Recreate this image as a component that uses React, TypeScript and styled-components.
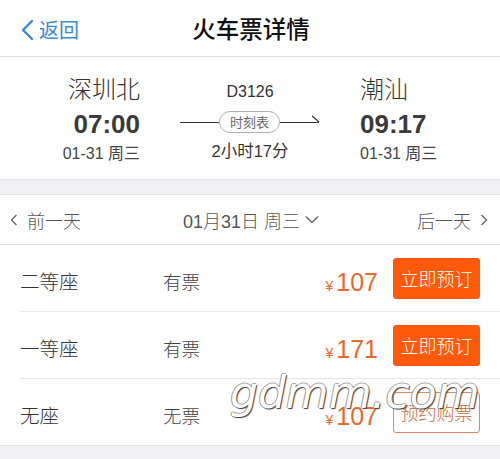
import React from 'react'
import styled, { createGlobalStyle } from 'styled-components'

const GlobalStyle = createGlobalStyle`
    html, body {
        margin: 0;
        padding: 0;
        background: #ffffff;
        font-family: "Liberation Sans", "Noto Sans CJK SC", sans-serif;
    }
`

type Seat = {
    name: string
    status: string
    price: number
    action: string
    outline?: boolean
}

const seats: Seat[] = [
    { name: '二等座', status: '有票', price: 107, action: '立即预订' },
    { name: '一等座', status: '有票', price: 171, action: '立即预订' },
    { name: '无座', status: '无票', price: 107, action: '预约购票', outline: true },
]

const App: React.FC = () => {
    return (
        <Page>
            <GlobalStyle />
            <NavBar>
                <BackLink>
                    <svg width="14" height="22" viewBox="0 0 14 22" fill="none">
                        <path d="M12 2L3 11l9 9" stroke="currentColor" strokeWidth="2.4" strokeLinecap="round" strokeLinejoin="round" />
                    </svg>
                    返回
                </BackLink>
                <Title>火车票详情</Title>
            </NavBar>

            <TrainInfo>
                <Station $align="right">
                    <StationName>深圳北</StationName>
                    <Time>07:00</Time>
                    <DateText>01-31 周三</DateText>
                </Station>
                <Middle>
                    <TrainNo>D3126</TrainNo>
                    <Track>
                        <Line />
                        <TimetablePill>时刻表</TimetablePill>
                        <Line />
                        <svg width="8" height="8" viewBox="0 0 8 8" style={{ marginLeft: -7, marginTop: -7 }}>
                            <path d="M0 1L7 7" stroke="#333" strokeWidth="1.3" />
                        </svg>
                    </Track>
                    <Duration>2小时17分</Duration>
                </Middle>
                <Station $align="left">
                    <StationName>潮汕</StationName>
                    <Time>09:17</Time>
                    <DateText>01-31 周三</DateText>
                </Station>
            </TrainInfo>

            <Gap />

            <DateBar>
                <DayNav>
                    <svg width="8" height="12" viewBox="0 0 8 12" fill="none">
                        <path d="M6.5 1L1.5 6l5 5" stroke="#666" strokeWidth="1.4" />
                    </svg>
                    前一天
                </DayNav>
                <CurrentDate>
                    01月31日 周三
                    <svg width="14" height="9" viewBox="0 0 14 9" fill="none">
                        <path d="M1 1.5l6 6 6-6" stroke="#666" strokeWidth="1.4" />
                    </svg>
                </CurrentDate>
                <DayNav>
                    后一天
                    <svg width="8" height="12" viewBox="0 0 8 12" fill="none">
                        <path d="M1.5 1l5 5-5 5" stroke="#666" strokeWidth="1.4" />
                    </svg>
                </DayNav>
            </DateBar>

            <SeatList>
                {seats.map((seat, i) => (
                    <SeatRow key={i} $last={i === seats.length - 1}>
                        <SeatName>{seat.name}</SeatName>
                        <SeatStatus>{seat.status}</SeatStatus>
                        <Price>
                            <Yen>¥</Yen>{seat.price}
                        </Price>
                        <ActionButton $outline={seat.outline}>{seat.action}</ActionButton>
                    </SeatRow>
                ))}
                <Watermark>gdmm.com</Watermark>
            </SeatList>

            <Footer />
        </Page>
    )
}

const Page = styled.div`
    width: 500px;
    height: 459px;
    overflow: hidden;
    background: #efeff4;
`

const NavBar = styled.header`
    position: relative;
    height: 56px;
    background: #ffffff;
    border-bottom: 1px solid #dcdcdc;
    display: flex;
    align-items: center;
    justify-content: center;
`

const BackLink = styled.div`
    position: absolute;
    left: 20px;
    top: 15px;
    display: flex;
    align-items: center;
    gap: 5px;
    color: #3a8ad0;
    font-family: "Noto Sans CJK SC", sans-serif;
    font-size: 20px;
`

const Title = styled.h1`
    margin: 0;
    font-family: "Noto Sans CJK SC", sans-serif;
    font-size: 23.5px;
    font-weight: 500;
    color: #111111;
    padding-left: 2px;
`

const TrainInfo = styled.section`
    height: 123px;
    background: #ffffff;
    border-bottom: 1px solid #e3e3e3;
    display: grid;
    grid-template-columns: 140px 140px 1fr;
    column-gap: 40px;
    box-sizing: border-box;
    padding-top: 14px;
`

const Station = styled.div<{ $align: 'left' | 'right' }>`
    display: flex;
    flex-direction: column;
    align-items: ${p => (p.$align === 'right' ? 'flex-end' : 'flex-start')};
`

const StationName = styled.div`
    font-family: "Noto Sans CJK SC", sans-serif;
    font-size: 24px;
    font-weight: 300;
    color: #333333;
    line-height: 34px;
`

const Time = styled.div`
    font-size: 26px;
    font-weight: 700;
    color: #3a3a3a;
    line-height: 34px;
    margin-top: 2px;
`

const DateText = styled.div`
    font-size: 16px;
    color: #444444;
    line-height: 24px;
    margin-top: 1px;
`

const Middle = styled.div`
    display: flex;
    flex-direction: column;
    align-items: center;
    padding-top: 11px;
`

const TrainNo = styled.div`
    font-size: 16px;
    color: #333333;
    line-height: 20px;
`

const Track = styled.div`
    width: 140px;
    height: 24px;
    margin-top: 8px;
    display: flex;
    align-items: center;
`

const Line = styled.div`
    flex: 1;
    height: 1px;
    background: #333333;
`

const TimetablePill = styled.div`
    height: 20px;
    padding: 0 10px;
    border: 1px solid #b0b0b0;
    border-radius: 11px;
    font-family: "Noto Sans CJK SC", sans-serif;
    font-size: 13px;
    color: #666666;
    line-height: 20px;
`

const Duration = styled.div`
    font-size: 16.5px;
    color: #333333;
    line-height: 24px;
    margin-top: 5px;
`

const Gap = styled.div`
    height: 14px;
    background: #efeff4;
    border-bottom: 1px solid #e3e3e3;
`

const DateBar = styled.nav`
    height: 49px;
    background: #ffffff;
    border-bottom: 1px solid #e3e3e3;
    display: flex;
    align-items: center;
    justify-content: space-between;
    padding: 0 12px 0 10px;
    font-family: "Liberation Sans", "Noto Sans CJK SC", sans-serif;
    font-size: 18px;
    font-weight: 300;
    color: #555555;
`

const DayNav = styled.div`
    display: flex;
    align-items: center;
    gap: 9px;
`

const CurrentDate = styled.div`
    display: flex;
    align-items: center;
    gap: 5px;
    margin-left: 4px;
`

const SeatList = styled.div`
    position: relative;
    background: #ffffff;
    border-bottom: 1px solid #e3e3e3;
`

const SeatRow = styled.div<{ $last?: boolean }>`
    height: 66px;
    margin-left: 20px;
    padding-right: 20px;
    display: flex;
    align-items: center;
    border-bottom: ${p => (p.$last ? 'none' : '1px solid #e6e6e6')};
`

const SeatName = styled.div`
    width: 143px;
    margin-top: 5px;
    font-family: "Noto Sans CJK SC", sans-serif;
    font-size: 19.5px;
    font-weight: 300;
    color: #333333;
`

const SeatStatus = styled.div`
    margin-top: 5px;
    font-family: "Noto Sans CJK SC", sans-serif;
    font-size: 18.5px;
    font-weight: 300;
    color: #444444;
`

const Price = styled.div`
    margin-left: auto;
    margin-right: 15px;
    font-size: 25px;
    color: #e8692a;
    margin-top: 8px;
`

const Yen = styled.span`
    font-size: 14px;
    margin-right: 3px;
`

const ActionButton = styled.button<{ $outline?: boolean }>`
    width: 87px;
    height: 41px;
    padding: 0;
    border-radius: 3px;
    border: 1px solid ${p => (p.$outline ? '#dd8a5e' : '#ff5a0a')};
    background: ${p => (p.$outline ? '#ffffff' : '#ff5a0a')};
    color: ${p => (p.$outline ? '#c96a3a' : '#ffffff')};
    font-family: "Noto Sans CJK SC", sans-serif;
    font-size: 18px;
    font-weight: 300;
`

const Watermark = styled.div`
    position: absolute;
    left: 230px;
    top: 122px;
    font-family: "DejaVu Sans", sans-serif;
    font-size: 44px;
    font-style: italic;
    font-weight: 300;
    color: #ffffff;
    text-shadow: 1px 1px 1px #333, -1px 0 0 #999, 0 -1px 0 #aaa;
    pointer-events: none;
`

const Footer = styled.div`
    height: 20px;
`

export default App
